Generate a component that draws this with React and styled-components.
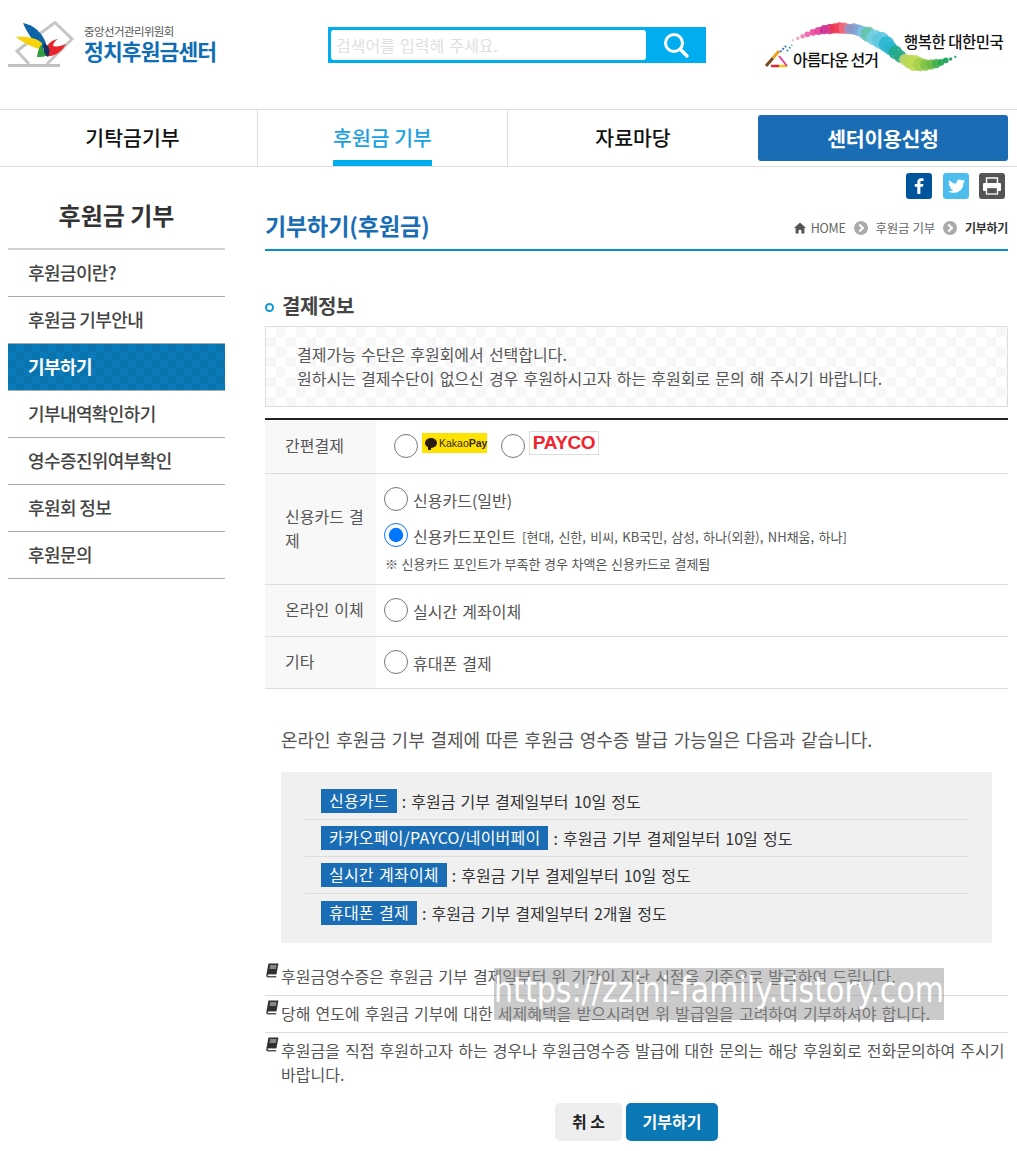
import React from "react";
import styled, { createGlobalStyle } from "styled-components";

const FONT = `"Noto Sans CJK KR", "Noto Sans", sans-serif`;

const GlobalStyle = createGlobalStyle`
  html, body { margin: 0; padding: 0; background: #fff; }
  body { font-family: ${FONT}; color: #444; }
  *, *::before, *::after { box-sizing: border-box; }
`;

const sideMenu = ["후원금이란?", "후원금 기부안내", "기부하기", "기부내역확인하기", "영수증진위여부확인", "후원회 정보", "후원문의"];

const receipts = [
  { label: "신용카드", text: ": 후원금 기부 결제일부터 10일 정도" },
  { label: "카카오페이/PAYCO/네이버페이", text: ": 후원금 기부 결제일부터 10일 정도" },
  { label: "실시간 계좌이체", text: ": 후원금 기부 결제일부터 10일 정도" },
  { label: "휴대폰 결제", text: ": 후원금 기부 결제일부터 2개월 정도" },
];

const notes = [
  "후원금영수증은 후원금 기부 결제일부터 위 기간이 지난 시점을 기준으로 발급하여 드립니다.",
  "당해 연도에 후원금 기부에 대한 세제혜택을 받으시려면 위 발급일을 고려하여 기부하셔야 합니다.",
  "후원금을 직접 후원하고자 하는 경우나 후원금영수증 발급에 대한 문의는 해당 후원회로 전화문의하여 주시기 바랍니다.",
];

// dots of the slogan ribbon: x, y, radius, colour
const ribbon = [
  [84, 22, 1, "#f7b6d2"], [90, 19, 1.5, "#f49ac1"], [96, 16, 2, "#f080b4"], [102, 13, 2.5, "#ee5fa7"],
  [109, 10, 3, "#ec4899"], [116, 8, 3.5, "#e23d98"], [123, 6, 4, "#c92a90"], [130, 5, 4.5, "#d6338a"],
  [136, 4, 4.5, "#e8344f"], [142, 3.5, 5, "#ef4056"], [148, 4, 5, "#ee6a7a"], [154, 5, 4.5, "#9a90c4"],
  [160, 5, 5, "#8a96c8"], [166, 7, 5, "#7fa5d6"], [172, 10, 5.5, "#7cc4e4"], [178, 13, 6.5, "#62c4a8"],
  [186, 18, 7, "#72cfe4"], [194, 22, 7.5, "#5cc6de"], [201, 28, 7, "#2cb8d4"], [206, 34, 6, "#2ab5cf"],
  [212, 40, 6, "#1fa98c"], [218, 46, 5.5, "#2aa884"], [224, 51, 5, "#c5d868"], [230, 54, 6, "#b5d85a"],
  [236, 56, 7, "#bcdc52"], [243, 58, 6, "#a4d04c"], [250, 59, 5, "#7fc246"], [257, 58, 4.5, "#68bb44"],
  [263, 57, 4, "#3fae4c"], [269, 55, 3, "#1ea650"], [275, 52, 2.5, "#129c54"], [281, 50, 1.5, "#0f9a5e"],
  [287, 47, 1, "#0e9a6e"],
];

const Logo = () => (
  <svg width="66" height="46" viewBox="0 0 66 46" aria-hidden="true">
    <path d="M22 20 L47 1.5 L64 18 L39 43" fill="none" stroke="#c6c6c6" strokeWidth="3" />
    <path d="M22 20 L9 30 L21 43" fill="none" stroke="#c6c6c6" strokeWidth="3" />
    <rect x="0" y="43" width="52" height="3" fill="#c2c2c2" />
    <path d="M15 2 C25 4 33 10 38 22 L34 30 C28 24 20 14 15 2 Z" fill="#0e63a8" />
    <path d="M8 16 C16 15 28 16 34 22 L33 29 C26 26 16 23 8 16 Z" fill="#f6d20f" />
    <path d="M33 24 L36 30 L40 33 C38 36 33 36 29 36 C30 30 31 27 33 24 Z" fill="#2f9e3f" />
    <path d="M38 28 C40 22 44 19 50 18 C47 20 45 22 45 25 C49 26 53 25 58 23 C54 31 46 36 38 35 Z" fill="#e8242c" />
    <path d="M36 22 C41 24 43 30 40 36 C37 35 34 28 36 22 Z" fill="#17325f" />
  </svg>
);

export default function App() {
  return (
    <Page>
      <GlobalStyle />
      <Header>
        <Brand>
          <Logo />
          <BrandText>
            <BrandOrg>중앙선거관리위원회</BrandOrg>
            <BrandName>정치후원금센터</BrandName>
          </BrandText>
        </Brand>
        <SearchBar>
          <SearchInput placeholder="검색어를 입력해 주세요." />
          <SearchButton aria-label="검색">
            <svg width="28" height="28" viewBox="0 0 28 28">
              <circle cx="12" cy="12" r="8.5" fill="none" stroke="#fff" strokeWidth="3" />
              <path d="M18 18 L25 25" stroke="#fff" strokeWidth="3.5" strokeLinecap="round" />
            </svg>
          </SearchButton>
        </SearchBar>
        <Slogan>
          <svg width="240" height="52" viewBox="0 0 240 52" aria-hidden="true">
            {ribbon.map(([x, y, r, c], i) => (
              <circle key={i} cx={0.8 * x - 39.2} cy={0.667 * y + 3.67} r={r * 1.15} fill={c} opacity="0.9" />
            ))}
            <path d="M1 44 L8 36" stroke="#7a4a20" strokeWidth="3" />
            <path d="M8 36 L14 29" stroke="#f0a020" strokeWidth="3" />
            <path d="M6 44 H14" stroke="#e8242c" strokeWidth="2.5" />
            <path d="M14 44 H22" stroke="#f6c20f" strokeWidth="2.5" />
            <path d="M14 34 L22 44" stroke="#e23d98" strokeWidth="2" />
            <path d="M15 30 L21 24" stroke="#3a6fc0" strokeWidth="2" strokeDasharray="2 1.5" />
            <path d="M22 29 L27 23" stroke="#1fa98c" strokeWidth="2" strokeDasharray="1.5 2" />
          </svg>
          <SloganLeft>아름다운 선거</SloganLeft>
          <SloganRight>행복한 대한민국</SloganRight>
        </Slogan>
      </Header>

      <Nav>
        <NavItem $first>기탁금기부</NavItem>
        <NavItem $active>
          <span>후원금 기부</span>
        </NavItem>
        <NavItem $last>자료마당</NavItem>
        <NavCta>
          <NavButton>센터이용신청</NavButton>
        </NavCta>
      </Nav>

      <ShareRow>
        <ShareIcon $bg="#00549c">
          <svg width="26" height="26" viewBox="0 0 26 26">
            <path d="M14.4 21 V13.8 H17 L17.4 11 H14.4 V9.4 C14.4 8.5 14.7 8 15.9 8 H17.5 V5.4 C17.2 5.4 16.3 5.3 15.2 5.3 C12.9 5.3 11.3 6.7 11.3 9.2 V11 H8.8 V13.8 H11.3 V21 Z" fill="#fff" />
          </svg>
        </ShareIcon>
        <ShareIcon $bg="#4dbdee">
          <svg width="26" height="26" viewBox="0 0 26 26">
            <path d="M22 8 C21.3 8.3 20.6 8.5 19.9 8.6 C20.6 8.1 21.2 7.5 21.5 6.6 C20.8 7 20 7.3 19.2 7.5 C17.9 6.1 15.7 6.1 14.4 7.4 C13.5 8.3 13.2 9.5 13.5 10.6 C10.6 10.5 8 9.1 6.2 6.9 C5.3 8.5 5.8 10.5 7.3 11.5 C6.7 11.5 6.2 11.3 5.7 11.1 C5.7 12.8 6.9 14.2 8.5 14.6 C8 14.7 7.5 14.7 7 14.6 C7.5 16 8.8 17 10.3 17 C8.9 18.1 7.1 18.6 5.3 18.4 C10.6 21.8 20.2 19.4 20.4 9.9 C21 9.4 21.6 8.8 22 8 Z" fill="#fff" />
          </svg>
        </ShareIcon>
        <ShareIcon $bg="#555">
          <svg width="26" height="26" viewBox="0 0 26 26">
            <path d="M7.5 10 V5 H18.5 V10" fill="none" stroke="#fff" strokeWidth="1.4" />
            <rect x="4" y="10" width="18" height="8" rx="1" fill="#fff" />
            <rect x="7.5" y="14.5" width="11" height="6.5" fill="#555" stroke="#fff" strokeWidth="1.3" />
          </svg>
        </ShareIcon>
      </ShareRow>

      <Body>
        <Sidebar>
          <SideTitle>후원금 기부</SideTitle>
          <SideList>
            {sideMenu.map((m) => (
              <SideItem key={m} $active={m === "기부하기"}>{m}</SideItem>
            ))}
          </SideList>
        </Sidebar>

        <Main>
          <TitleRow>
            <PageTitle>기부하기(후원금)</PageTitle>
            <Crumbs>
              <svg width="12" height="12" viewBox="0 0 12 12">
                <path d="M6 .5 L12 6 H10.4 V11.5 H7.4 V8 H4.6 V11.5 H1.6 V6 H0 Z" fill="#555" />
              </svg>
              <span>HOME</span>
              <CrumbArrow />
              <span>후원금 기부</span>
              <CrumbArrow />
              <strong>기부하기</strong>
            </Crumbs>
          </TitleRow>

          <SectionTitle>결제정보</SectionTitle>
          <InfoBox>
            결제가능 수단은 후원회에서 선택합니다.
            <br />
            원하시는 결제수단이 없으신 경우 후원하시고자 하는 후원회로 문의 해 주시기 바랍니다.
          </InfoBox>

          <PayTable>
            <PayRow $h={54}>
              <PayHead>간편결제</PayHead>
              <QuickCell>
                <Radio name="pay" />
                <KakaoMark><KakaoBubble />Kakao<b>Pay</b></KakaoMark>
                <Radio name="pay" />
                <PaycoMark>PAYCO</PaycoMark>
              </QuickCell>
            </PayRow>
            <PayRow $h={111}>
              <PayHead>신용카드 결제</PayHead>
              <PayCell $top={12}>
                <Choice><Radio name="pay" />신용카드(일반)</Choice>
                <Choice $gap={10}>
                  <Radio name="pay" defaultChecked />신용카드포인트
                  <CardList>[현대, 신한, 비씨, KB국민, 삼성, 하나(외환), NH채움, 하나]</CardList>
                </Choice>
                <CardNote>※ 신용카드 포인트가 부족한 경우 차액은 신용카드로 결제됨</CardNote>
              </PayCell>
            </PayRow>
            <PayRow $h={52}>
              <PayHead>온라인 이체</PayHead>
              <PayCell $top={12}><Choice><Radio name="pay" />실시간 계좌이체</Choice></PayCell>
            </PayRow>
            <PayRow $h={52}>
              <PayHead>기타</PayHead>
              <PayCell $top={12}><Choice><Radio name="pay" />휴대폰 결제</Choice></PayCell>
            </PayRow>
          </PayTable>

          <Lead>온라인 후원금 기부 결제에 따른 후원금 영수증 발급 가능일은 다음과 같습니다.</Lead>

          <ReceiptBox>
            {receipts.map((r) => (
              <ReceiptRow key={r.label}>
                <ReceiptTag>{r.label}</ReceiptTag>
                <span>{r.text}</span>
              </ReceiptRow>
            ))}
          </ReceiptBox>

          <Notes>
            {notes.map((n) => (
              <Note key={n}>
                <NoteIcon viewBox="0 0 14 15" width="14" height="15">
                  <path d="M3.5 .5 H13.5 L11.5 11 H1.5 Z" fill="#2f2f2f" />
                  <path d="M5 3 H11.5 M4.6 5 H11" stroke="#ddd" strokeWidth="1" />
                  <path d="M1.5 11 C.5 13.5 1.5 14.5 3 14.5 H11 L11.4 13 H3.6 C2.8 13 2.8 11.8 3.6 11.6 H11.5 L11.5 11 Z" fill="#555" />
                </NoteIcon>
                {n}
              </Note>
            ))}
          </Notes>

          <Actions>
            <ActionButton>취 소</ActionButton>
            <ActionButton $primary>기부하기</ActionButton>
          </Actions>
        </Main>
      </Body>

      <Watermark><span>https://zzini-family.tistory.com</span></Watermark>
    </Page>
  );
}

const Page = styled.div`
  position: relative;
  width: 1017px;
  height: 1151px;
  overflow: hidden;
`;

const Header = styled.header`
  display: grid;
  grid-template-columns: 328px 378px 1fr;
  height: 110px;
  border-bottom: 1px solid #ddd;
`;

const Brand = styled.div`
  display: flex;
  align-items: flex-start;
  gap: 10px;
  padding: 21px 0 0 8px;
`;

const BrandText = styled.div`
  display: flex;
  flex-direction: column;
  margin-top: 3px;
`;

const BrandOrg = styled.div`
  font-size: 11.5px;
  line-height: 14px;
  color: #555;
  letter-spacing: -0.6px;
`;

const BrandName = styled.div`
  font-size: 21.5px;
  line-height: 26px;
  font-weight: 700;
  color: #0f6db5;
  letter-spacing: -0.9px;
`;

const SearchBar = styled.div`
  display: flex;
  height: 36px;
  margin-top: 27px;
  background: #00aeef;
  padding: 3px 0 3px 3px;
`;

const SearchInput = styled.input`
  width: 315px;
  border: 0;
  border-radius: 3px;
  padding: 0 5px;
  background: #fff;
  font-family: ${FONT};
  font-size: 16px;
  word-spacing: 1.6px;
  outline: none;
  &::placeholder { color: #e0e0e0; }
`;

const SearchButton = styled.div`
  flex: 1;
  display: flex;
  align-items: center;
  justify-content: center;
`;

const Slogan = styled.div`
  position: relative;
  margin: 22px 0 0 59px;
  height: 52px;
`;

const SloganLeft = styled.span`
  position: absolute;
  left: 28px;
  top: 25px;
  font-size: 16px;
  font-weight: 500;
  color: #111;
  letter-spacing: -1px;
  white-space: nowrap;
`;

const SloganRight = styled.span`
  position: absolute;
  left: 139px;
  top: 8px;
  font-size: 15.5px;
  font-weight: 500;
  color: #111;
  letter-spacing: -0.5px;
  white-space: nowrap;
`;

const Nav = styled.nav`
  display: grid;
  grid-template-columns: 258px 250px 250px 259px;
  height: 57px;
  border-bottom: 1px solid #ddd;
`;

const NavItem = styled.div`
  display: flex;
  justify-content: center;
  padding-left: ${(p) => (p.$first ? 8 : 0)}px;
  font-size: 20.5px;
  font-weight: 500;
  line-height: 54px;
  color: ${(p) => (p.$active ? "#1ba1e2" : "#111")};
  border-right: ${(p) => (p.$last ? "0" : "1px solid #ddd")};
  span {
    display: block;
    height: 56px;
    border-bottom: 6px solid #00aeef;
  }
`;

const NavCta = styled.div`
  padding: 5px 9px 5px 0;
`;

const NavButton = styled.div`
  height: 46px;
  border-radius: 3px;
  background: #1a6db5;
  color: #fff;
  font-size: 20.5px;
  font-weight: 700;
  line-height: 47px;
  text-align: center;
  letter-spacing: -0.3px;
`;

const ShareRow = styled.div`
  display: flex;
  justify-content: flex-end;
  gap: 10px;
  height: 32px;
  padding: 6px 12px 0 0;
`;

const ShareIcon = styled.div`
  width: 26px;
  height: 26px;
  border-radius: 3px;
  background: ${(p) => p.$bg};
  &:first-child { margin-right: 1px; }
`;

const Body = styled.div`
  display: grid;
  grid-template-columns: 217px 743px;
  column-gap: 40px;
  padding-left: 8px;
`;

const Sidebar = styled.aside`
  display: flex;
  flex-direction: column;
`;

const SideTitle = styled.h2`
  margin: 0;
  height: 51px;
  border-bottom: 2px solid #d2d2d2;
  font-size: 24px;
  font-weight: 700;
  line-height: 31px;
  text-align: center;
  color: #333;
`;

const SideList = styled.ul`
  margin: 0;
  padding: 0;
  list-style: none;
`;

const checker = (a, b, size) => `repeating-conic-gradient(${a} 0% 25%, ${b} 0% 50%) 0 0 / ${size}px ${size}px`;

const SideItem = styled.li`
  height: 47px;
  padding-left: 20px;
  border-bottom: 1px solid #aaa;
  font-size: 18px;
  line-height: 45px;
  letter-spacing: -0.6px;
  color: ${(p) => (p.$active ? "#fff" : "#444")};
  font-weight: ${(p) => (p.$active ? 700 : 500)};
  background: ${(p) => (p.$active ? checker("#0b7ab8", "#0873ad", 16) : "transparent")};
`;

const Main = styled.main`
  display: flex;
  flex-direction: column;
  font-size: 16px;
  word-spacing: 1.5px;
`;

const TitleRow = styled.div`
  display: flex;
  justify-content: space-between;
  align-items: flex-end;
  height: 52px;
  border-bottom: 2px solid #0a8fd6;
`;

const PageTitle = styled.h1`
  margin: 0 0 6px;
  font-size: 23px;
  font-weight: 700;
  line-height: 36px;
  color: #1a6db5;
  letter-spacing: -0.1px;
`;

const Crumbs = styled.div`
  display: flex;
  align-items: center;
  gap: 5px;
  padding-bottom: 13px;
  font-size: 12.5px;
  line-height: 16px;
  color: #666;
  letter-spacing: -0.3px;
  word-spacing: 1px;
  strong { color: #333; font-weight: 700; font-size: 12px; }
`;

const CrumbArrow = styled.i`
  position: relative;
  width: 14px;
  height: 14px;
  margin: 0 3px;
  border-radius: 50%;
  background: #aaa;
  &::after {
    content: "";
    position: absolute;
    left: 3px;
    top: 4px;
    width: 6px;
    height: 6px;
    border-top: 2px solid #fff;
    border-right: 2px solid #fff;
    transform: rotate(45deg);
  }
`;

const SectionTitle = styled.h3`
  position: relative;
  margin: 42px 0 0;
  height: 33px;
  padding-left: 17px;
  font-size: 20px;
  font-weight: 700;
  line-height: 26px;
  color: #444;
  letter-spacing: -0.4px;
  &::before {
    content: "";
    position: absolute;
    left: 0;
    top: 10px;
    width: 9px;
    height: 9px;
    border: 2.5px solid #0a9bd0;
    border-radius: 50%;
  }
`;

const InfoBox = styled.div`
  height: 81px;
  padding: 15px 0 0 31px;
  border: 1px solid #ddd;
  background: ${checker("#f7f7f7", "#fff", 20)};
  font-size: 16px;
  line-height: 24px;
  color: #555;
`;

const PayTable = styled.div`
  margin-top: 11px;
  border-top: 2px solid #222;
`;

const PayRow = styled.div`
  display: grid;
  grid-template-columns: 111px 1fr;
  height: ${(p) => p.$h}px;
  border-bottom: 1px solid #ddd;
`;

const PayHead = styled.div`
  display: flex;
  align-items: center;
  padding: 0 10px 3px 20px;
  background: #f8f8f8;
  line-height: 24px;
  color: #555;
`;

const PayCell = styled.div`
  display: flex;
  flex-direction: column;
  padding: ${(p) => p.$top}px 0 0 8px;
  color: #555;
`;

const QuickCell = styled.div`
  display: flex;
  align-items: flex-start;
  padding: 11px 0 0 18px;
`;

const Radio = styled.input.attrs({ type: "radio" })`
  width: 24px;
  height: 24px;
  margin: 3px 4px 0 0;
  flex: none;
  accent-color: #0075ff;
`;

const Choice = styled.label`
  display: flex;
  align-items: center;
  height: 26px;
  padding-top: 2px;
  margin-top: ${(p) => p.$gap || 0}px;
  white-space: nowrap;
  input { margin: -2px 5px 0 0; }
`;

const CardList = styled.span`
  margin-left: 6px;
  font-size: 13px;
`;

const CardNote = styled.div`
  margin: 7px 0 0 1px;
  font-size: 13px;
  line-height: 18px;
  word-spacing: 0.7px;
  color: #555;
`;

const KakaoMark = styled.div`
  display: flex;
  align-items: center;
  width: 65px;
  height: 20px;
  margin: 2px 14px 0 0;
  padding-left: 3px;
  background: #ffe300;
  font-family: "Liberation Sans", sans-serif;
  font-size: 10.5px;
  color: #3c2a1e;
  b { font-weight: 700; }
`;

const KakaoBubble = styled.i`
  position: relative;
  flex: none;
  width: 12px;
  height: 10px;
  margin-right: 2px;
  border-radius: 50%;
  background: #2a1a12;
  &::after {
    content: "";
    position: absolute;
    left: 3px;
    bottom: -2px;
    width: 3px;
    height: 3px;
    background: #2a1a12;
  }
`;

const PaycoMark = styled.div`
  width: 70px;
  height: 24px;
  border: 1px solid #ddd;
  font-family: "Liberation Sans", sans-serif;
  font-size: 19px;
  font-weight: 700;
  line-height: 21px;
  text-align: center;
  color: #f0242e;
  letter-spacing: -0.4px;
`;

const Lead = styled.p`
  margin: 36px 0 0 16px;
  height: 47px;
  font-size: 18px;
  line-height: 28px;
  color: #555;
  word-spacing: 1.6px;
`;

const ReceiptBox = styled.div`
  margin: 0 16px;
  height: 171px;
  padding: 11px 24px 0;
  background: #f0f0f0;
`;

const ReceiptRow = styled.div`
  display: flex;
  align-items: center;
  gap: 5px;
  height: 37px;
  padding-left: 16px;
  border-bottom: 1px solid #ddd;
  color: #333;
  &:last-child { border-bottom: 0; }
`;

const ReceiptTag = styled.span`
  padding: 0 8px;
  height: 24px;
  line-height: 23px;
  background: #1a6db5;
  color: #fff;
  letter-spacing: 0.2px;
`;

const Notes = styled.ul`
  margin: 16px 0 0;
  padding: 0;
  list-style: none;
`;

const Note = styled.li`
  position: relative;
  padding: 5px 0 7px 16px;
  border-bottom: 1px solid #ddd;
  line-height: 24px;
  color: #555;
  &:last-child { border-bottom: 0; }
`;

const NoteIcon = styled.svg`
  position: absolute;
  left: 0;
  top: 4px;
`;

const Actions = styled.div`
  display: flex;
  justify-content: center;
  gap: 4px;
  margin-top: 10px;
`;

const ActionButton = styled.div`
  height: 38px;
  width: ${(p) => (p.$primary ? 92 : 67)}px;
  border-radius: 5px;
  background: ${(p) => (p.$primary ? "#0a78b4" : "#eee")};
  color: ${(p) => (p.$primary ? "#fff" : "#222")};
  font-size: 16px;
  font-weight: 700;
  line-height: 37px;
  text-align: center;
  word-spacing: 0;
`;

const Watermark = styled.div`
  position: absolute;
  left: 494px;
  top: 968px;
  width: 450px;
  height: 52px;
  background: rgba(150, 150, 150, 0.5);
  color: #fff;
  font-family: "DejaVu Sans", sans-serif;
  font-size: 35px;
  line-height: 45px;
  white-space: nowrap;
  span {
    display: inline-block;
    transform: scaleX(0.86);
    transform-origin: left center;
  }
`;
